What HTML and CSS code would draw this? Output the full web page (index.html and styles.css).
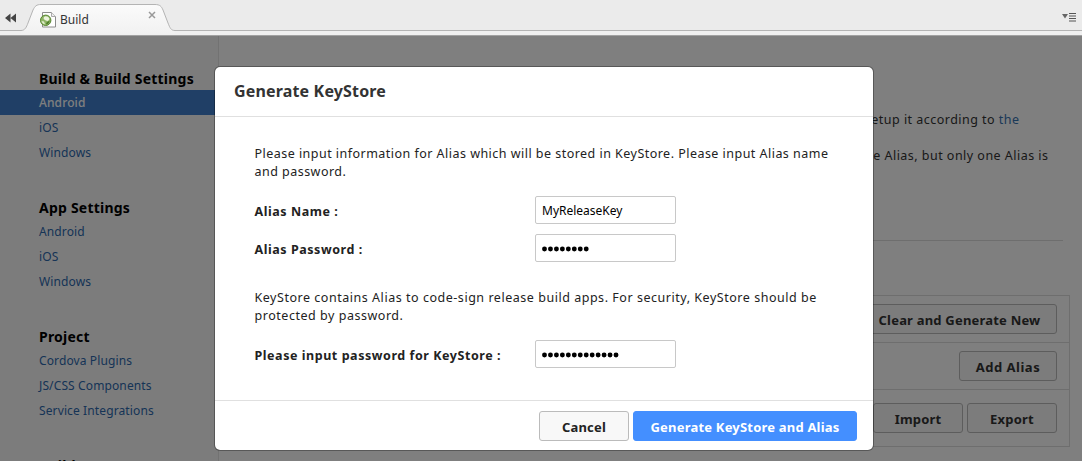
FILE: index.html
```
<!DOCTYPE html>
<html lang="en">
<head>
<meta charset="utf-8">
<title>Build</title>
<link rel="stylesheet" href="styles.css">
</head>
<body>
<header class="tabbar">
  <svg class="tabbar-shape" width="1082" height="36" viewBox="0 0 1082 36">
    <defs><linearGradient id="tab" x1="0" y1="0" x2="0" y2="1"><stop offset="0" stop-color="#fbfbfb"/><stop offset="1" stop-color="#f1f1f1"/></linearGradient></defs>
    <rect y="31" width="1082" height="4" fill="#f0f0f0"/>
    <path d="M21 31.500C25 30.500 26.500 27 28 23L33 10C35 6 36.500 4.500 41 4.500H155C160 4.500 161.500 6.500 163 10L168 23C170 28 171 30.500 175 31.500V34H21Z" fill="url(#tab)"/>
    <path d="M0 30.500H21C25 30.500 26.500 27 28 23L33 10C35 6 36.500 4.500 41 4.500H155C160 4.500 161.500 6.500 163 10L168 23C170 28 171 30.500 175 30.500H1082" fill="none" stroke="#b4b4b4"/>
    <path d="M0 35.500H1082" stroke="#a2a2a2"/>
  </svg>
  <svg class="back" width="12" height="10" viewBox="0 0 12 10"><path d="M5.500 .5V9.500L0 5ZM11 .5V9.500L5.500 5Z" fill="#444"/></svg>
  <svg class="page-icon" width="17" height="17" viewBox="0 0 17 17">
    <path d="M2.500 1.500H11.500L15.500 5.500V16H2.500Z" fill="#fff" stroke="#8c8c8c"/>
    <path d="M11.500 1.500V5.500H15.500" fill="#eee" stroke="#aaa"/>
    <circle cx="5.700" cy="9.300" r="5.200" fill="#8fb566" stroke="#56852f"/>
    <path d="M4 6C5.500 4.500 8.500 5.500 9.300 7.500C9.500 9.500 7.500 10.500 6 9.500C4.500 8.500 3 8.500 4 6Z" fill="#edf4df"/>
    <path d="M1.500 10L4 10.500L5 13.300C3 13 1.800 12 1.500 10Z" fill="#dfebca"/>
    <path d="M6 12L9.500 9.500C9.500 11.500 8.500 13 6.500 13.500Z" fill="#4f7d2a"/>
  </svg>
  <span class="tab-title">Build</span>
  <svg class="close" width="8" height="8" viewBox="0 0 8 8"><path d="M1 1L7 7M7 1L1 7" stroke="#999" stroke-width="1.500"/></svg>
  <svg class="menu" width="15" height="9" viewBox="0 0 15 9"><path d="M0 1H6L3 5.500Z" fill="#666"/><path d="M7 .5H14M7 3H14M7 5.500H14M7 8H14" stroke="#555"/></svg>
</header>
<div class="page">
  <nav class="sidebar">
    <h2>Build &amp; Build Settings</h2>
    <a class="selected">Android</a><a>iOS</a><a>Windows</a>
    <h2>App Settings</h2>
    <a>Android</a><a>iOS</a><a>Windows</a>
    <h2>Project</h2>
    <a>Cordova Plugins</a><a>JS/CSS Components</a><a>Service Integrations</a>
    <h2>Build</h2>
  </nav>
  <main class="content">
    <p class="first">setup it according to&nbsp;<a>the</a></p>
    <p class="second">e Alias, but only one Alias is</p>
    <hr>
    <div class="table">
      <div class="row"><span class="btn clear">Clear and Generate New</span></div>
      <div class="row"><span class="btn add">Add Alias</span></div>
      <div class="row last"><span class="btn">Import</span><span class="btn">Export</span></div>
    </div>
  </main>
</div>
<div class="overlay">
  <section class="modal">
    <h1>Generate KeyStore</h1>
    <div class="modal-body">
      <p>Please input information for Alias which will be stored in KeyStore. Please input Alias name<br>and password.</p>
      <div class="field name"><label>Alias Name :</label><span class="input">MyReleaseKey</span></div>
      <div class="field"><label>Alias Password :</label><span class="input"><svg width="50" height="6"><path class="dots" d="M2.500 3H45"/></svg></span></div>
      <p class="info">KeyStore contains Alias to code-sign release build apps. For security, KeyStore should be<br>protected by password.</p>
      <div class="field store"><label>Please input password for KeyStore :</label><span class="input"><svg width="80" height="6"><path class="dots" d="M2.500 3H75"/></svg></span></div>
    </div>
    <footer><span class="btn cancel">Cancel</span><span class="btn primary">Generate KeyStore and Alias</span></footer>
  </section>
</div>
</body>
</html>
```
FILE: styles.css
```
* { box-sizing: border-box; }
body { margin: 0; width: 1082px; height: 461px; overflow: hidden; font: 12.5px/18px "Noto Sans", sans-serif; color: #333; letter-spacing: .47px; }
h1, h2, p { margin: 0; white-space: nowrap; }
svg { display: block; flex: none; }
.tabbar { position: relative; height: 36px; background: #ebebeb; display: flex; align-items: flex-start; padding-left: 5px; }
.tabbar-shape { position: absolute; left: 0; top: 0; }
.tabbar > :not(.tabbar-shape) { position: relative; }
.back { margin-top: 13px; }
.page-icon { margin: 11px 0 0 23px; }
.tab-title { margin: 11px 0 0 3px; width: 87.500px; font-size: 12px; letter-spacing: 0; color: #333; }
.close { margin-top: 11px; }
.menu { margin: 13px 5px 0 auto; }
.page { display: flex; height: 425px; overflow: hidden; background: #fff; }
.sidebar { width: 219px; height: 425px; overflow: hidden; padding-top: 30px; background: #f9f9f9; border-right: 1px solid #e4e4e4; flex: none; }
.sidebar h2 { height: 24px; padding-left: 39px; font-size: 14px; line-height: 25px; letter-spacing: .22px; color: #000; }
.sidebar a { display: block; height: 25px; padding-left: 39px; font-size: 12px; line-height: 25px; letter-spacing: .12px; color: #2c68ad; }
.sidebar a + h2 { margin-top: 30px; }
.sidebar .selected { background: #407fcc; color: #fff; font-weight: 500; }
.content { flex: 1; }
.content p { display: flex; justify-content: flex-end; letter-spacing: .47px; }
.content p a { color: #3572b0; }
.first { padding: 75px 62.500px 0 0; }
.second { padding: 18px 33.500px 0 0; }
hr { height: 1px; border: 0; background: #dcdcdc; margin: 75px 19px 54px 0; }
.table { margin-right: 12px; border: 1px solid #dcdcdc; }
.row { height: 47px; display: flex; gap: 4px; justify-content: flex-end; align-items: flex-start; padding: 8px 12px 0 0; border-bottom: 1px solid #dcdcdc; }
.row.last { height: 56px; padding-top: 13px; border: 0; }
.btn { height: 30px; width: 90px; display: flex; align-items: center; justify-content: center; padding-top: 2px; border: 1px solid #bbb; border-radius: 3px; background: #f8f8f8; font-weight: bold; font-size: 13px; letter-spacing: .2px; white-space: nowrap; }
.clear { width: 195px; }
.add { width: 98px; letter-spacing: .5px; }
.overlay { position: absolute; left: 0; top: 36px; width: 1082px; height: 425px; overflow: hidden; padding: 30px 0 0 214px; background: rgba(0,0,0,.5); }
.modal { width: 660px; height: 385px; background: #fff; background-clip: padding-box; border: 1px solid rgba(0,0,0,.3); border-radius: 6px; color: #222; }
.modal h1 { height: 50px; padding: 0 19px; border-bottom: 1px solid #e0e0e0; font-size: 16px; line-height: 49px; letter-spacing: .16px; color: #333; }
.modal-body { height: 284px; padding: 28px 40px 0 39.500px; border-bottom: 1px solid #e0e0e0; }
.field { display: flex; align-items: center; height: 28px; margin-top: 10px; }
.field.name { margin-top: 15px; }
.modal-body .info { margin-top: 27px; letter-spacing: .53px; }
.field.store { margin-top: 15px; }
label { width: 280.500px; font-weight: bold; padding-top: 3px; letter-spacing: .55px; white-space: nowrap; }
.input { width: 141px; height: 28px; display: flex; align-items: center; padding: 2px 0 0 6px; border: 1px solid #c8c8c8; border-radius: 2px; font-size: 12px; letter-spacing: 0; color: #000; }
.dots { fill: none; stroke: #000; stroke-width: 4.900; stroke-linecap: round; stroke-dasharray: 0 5.960; }
.modal footer { display: flex; gap: 4px; justify-content: flex-end; padding: 10px 16px 0 0; }
.primary { width: 224px; background: #448fff; border-color: #448fff; color: #fff; }
```
